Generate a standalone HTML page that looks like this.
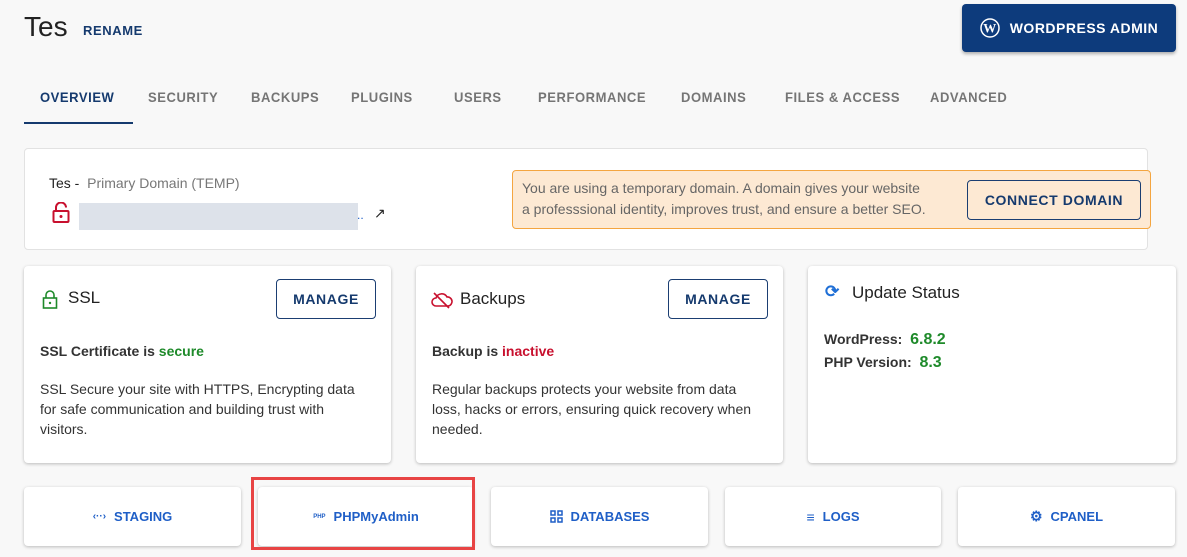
<!DOCTYPE html>
<html><head><meta charset="utf-8"><style>
*{margin:0;padding:0;box-sizing:border-box}
body{width:1187px;height:557px;background:#f8f8f8;font-family:"Liberation Sans",sans-serif;position:relative;overflow:hidden;color:#222}
.a{position:absolute}
.tab{position:absolute;top:89px;font-size:14px;letter-spacing:.6px;color:#757575;font-weight:bold;transform:scaleX(.93);transform-origin:left}
.card{position:absolute;background:#fff;border-radius:4px;box-shadow:0 1px 3px rgba(0,0,0,.25)}
.btn{position:absolute;border:1px solid #1b3e72;border-radius:4px;color:#153a6e;font-weight:bold;font-size:14px;letter-spacing:.6px;display:flex;align-items:center;justify-content:center}
.bb{position:absolute;top:487px;height:59px;background:#fff;border-radius:4px;box-shadow:0 1px 3px rgba(0,0,0,.25);display:flex;align-items:center;justify-content:center;color:#1f5fc7;font-weight:bold;font-size:13px;gap:8px}
.t{font-size:14px;line-height:20px;color:#333}
</style></head><body>
<div class="a" style="left:24px;top:11px;font-size:28px;color:#222">Tes</div>
<div class="a" style="left:83px;top:23px;font-size:13px;font-weight:bold;color:#153a6e;letter-spacing:.6px">RENAME</div>
<div class="a" style="left:962px;top:4px;width:214px;height:48px;background:#0d3b7c;border-radius:4px;box-shadow:0 2px 3px rgba(0,0,0,.3);display:flex;align-items:center;justify-content:center;gap:10px;color:#fff;font-weight:bold;font-size:14px;letter-spacing:.5px">
<svg width="20" height="20" viewBox="0 0 20 20"><circle cx="10" cy="10" r="9" fill="none" stroke="#fff" stroke-width="1.5"/><text x="10" y="14.5" text-anchor="middle" font-size="13" font-weight="bold" fill="#fff" font-family="Liberation Serif">W</text></svg>WORDPRESS ADMIN</div>
<div class="tab" style="left:40px;color:#153a6e">OVERVIEW</div>
<div class="tab" style="left:148px">SECURITY</div>
<div class="tab" style="left:251px">BACKUPS</div>
<div class="tab" style="left:351px">PLUGINS</div>
<div class="tab" style="left:454px">USERS</div>
<div class="tab" style="left:538px">PERFORMANCE</div>
<div class="tab" style="left:681px">DOMAINS</div>
<div class="tab" style="left:785px">FILES &amp; ACCESS</div>
<div class="tab" style="left:930px">ADVANCED</div>
<div class="a" style="left:24px;top:122px;width:109px;height:2px;background:#153a6e"></div>

<div class="a" style="left:24px;top:148px;width:1124px;height:102px;background:#fff;border:1px solid #e2e2e2;border-radius:4px"></div>
<div class="a" style="left:49px;top:175px;font-size:14px;color:#222">Tes - &nbsp;<span style="color:#777">Primary Domain (TEMP)</span></div>
<svg class="a" style="left:52px;top:202px" width="18" height="21" viewBox="0 0 18 21"><path d="M4 9V5.5a5 5 0 0 1 10 0" fill="none" stroke="#c8102e" stroke-width="2"/><rect x="1.5" y="9" width="15" height="11" rx="1" fill="none" stroke="#c8102e" stroke-width="2"/><circle cx="9" cy="14.5" r="1.5" fill="#c8102e"/></svg>
<div class="a" style="left:79px;top:203px;width:279px;height:27px;background:#dde2ea"></div>
<div class="a" style="left:357px;top:208px;font-size:12px;color:#1f5fc7">..</div>
<div class="a" style="left:374px;top:205px;font-size:14px;color:#222">↗</div>
<div class="a" style="left:512px;top:170px;width:639px;height:59px;background:#fde9d3;border:1px solid #f4a540;border-radius:4px"></div>
<div class="a t" style="left:522px;top:178px;color:#666;line-height:21px">You are using a temporary domain. A domain gives your website<br>a professsional identity, improves trust, and ensure a better SEO.</div>
<div class="btn" style="left:967px;top:180px;width:174px;height:40px">CONNECT DOMAIN</div>

<div class="card" style="left:24px;top:266px;width:367px;height:197px"></div>
<svg class="a" style="left:42px;top:290px" width="16" height="19" viewBox="0 0 16 19"><path d="M4 8V5a4 4 0 0 1 8 0v3" fill="none" stroke="#1e8a2a" stroke-width="1.6"/><rect x="1.5" y="8" width="13" height="10" fill="none" stroke="#1e8a2a" stroke-width="1.6"/><circle cx="8" cy="13" r="1.2" fill="#1e8a2a"/></svg>
<div class="a" style="left:68px;top:288px;font-size:17px">SSL</div>
<div class="btn" style="left:276px;top:279px;width:100px;height:40px">MANAGE</div>
<div class="a t" style="left:40px;top:341px;font-weight:bold">SSL Certificate is <span style="color:#1e8a2a;font-weight:bold">secure</span></div>
<div class="a t" style="left:40px;top:379px;width:330px">SSL Secure your site with HTTPS, Encrypting data for safe communication and building trust with visitors.</div>

<div class="card" style="left:416px;top:266px;width:367px;height:197px"></div>
<svg class="a" style="left:431px;top:291px" width="22" height="18" viewBox="0 0 22 18"><path d="M5 15a4 4 0 0 1 0-8 6 6 0 0 1 11-1 4.5 4.5 0 0 1 1 9z" fill="none" stroke="#c8102e" stroke-width="1.6"/><path d="M3 2l15 15" stroke="#c8102e" stroke-width="1.6"/></svg>
<div class="a" style="left:460px;top:289px;font-size:17px">Backups</div>
<div class="btn" style="left:668px;top:279px;width:100px;height:40px">MANAGE</div>
<div class="a t" style="left:432px;top:341px;font-weight:bold">Backup is <span style="color:#c8102e">inactive</span></div>
<div class="a t" style="left:432px;top:379px;width:332px">Regular backups protects your website from data loss, hacks or errors, ensuring quick recovery when needed.</div>

<div class="card" style="left:808px;top:266px;width:368px;height:197px"></div>
<div class="a" style="left:825px;top:282px;font-size:17px;color:#1f6fd6;font-weight:bold">⟳</div>
<div class="a" style="left:852px;top:283px;font-size:17px">Update Status</div>
<div class="a t" style="left:824px;top:329px;font-weight:bold">WordPress: &nbsp;<span style="color:#1e8a2a;font-size:16px">6.8.2</span></div>
<div class="a t" style="left:824px;top:352px;font-weight:bold">PHP Version: &nbsp;<span style="color:#1e8a2a;font-size:16px">8.3</span></div>

<div class="bb" style="left:24px;width:217px"><span style="font-size:10px">‹··›</span>STAGING</div>
<div class="bb" style="left:258px;width:216px"><span style="font-size:6px">PHP</span>PHPMyAdmin</div>
<div class="bb" style="left:491px;width:217px"><svg width="13" height="13" viewBox="0 0 13 13" fill="none" stroke="#1f5fc7" stroke-width="1.5"><rect x="1" y="1" width="4" height="4"/><rect x="8" y="1" width="4" height="4"/><rect x="1" y="8" width="4" height="4"/><rect x="8" y="8" width="4" height="4"/></svg>DATABASES</div>
<div class="bb" style="left:725px;width:216px"><span style="font-size:14px">≡</span>LOGS</div>
<div class="bb" style="left:958px;width:217px"><span style="font-size:14px">⚙</span>CPANEL</div>
<div class="a" style="left:251px;top:477px;width:224px;height:73px;border:3px solid #e84444"></div>
</body></html>
